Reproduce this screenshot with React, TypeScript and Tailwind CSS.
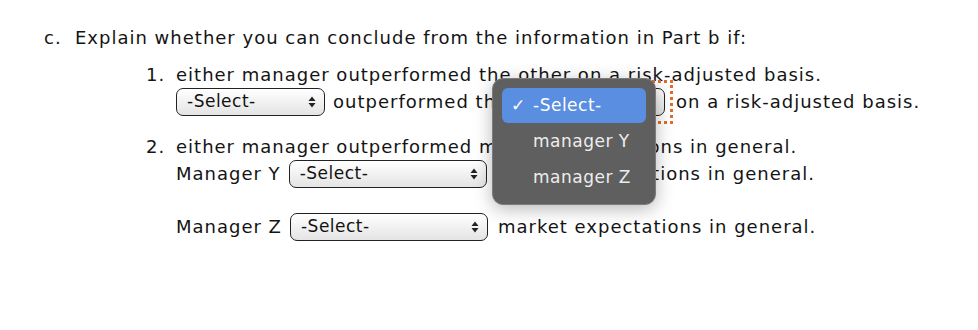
import React from 'react';

function Arrows() {
  return (
    <svg width="8" height="12" viewBox="0 0 8 12" className="shrink-0">
      <path d="M4 0.5 L7.5 5 L0.5 5 Z" fill="#222" />
      <path d="M4 11.5 L7.5 7 L0.5 7 Z" fill="#222" />
    </svg>
  );
}

function FakeSelect({ w }: { w: string }) {
  return (
    <div
      className={`${w} h-[28px] shrink-0 flex items-center justify-between pl-[10px] pr-[8px] rounded-[7px] border-[1.5px] border-[#222] bg-gradient-to-b from-white to-[#e4e4e4] text-[17px] tracking-[0.5px] text-[#111]`}
    >
      <span>-Select-</span>
      <Arrows />
    </div>
  );
}

export default function App() {
  return (
    <div className="relative w-[978px] h-[330px] bg-white overflow-hidden pt-[24px] pl-[44px] text-[18px] leading-[27px] tracking-[1px] text-[#141414] font-['DejaVu_Sans',sans-serif]">
      {/* part c heading */}
      <div className="flex">
        <span className="w-[31px] shrink-0">c.</span>
        <span>Explain whether you can conclude from the information in Part b if:</span>
      </div>

      <div className="mt-[10px] ml-[102px] space-y-[18px]">
        {/* item 1 */}
        <div className="flex">
          <span className="w-[30px] shrink-0">1.</span>
          <div>
            <p>either manager outperformed the other on a risk-adjusted basis.</p>
            <div className="flex items-center h-[27px] gap-[8px]">
              <FakeSelect w="w-[149px]" />
              <span>outperformed the</span>
              {/* focused select: square dotted focus ring */}
              <div className="shrink-0 outline-dotted outline-[3px] outline-offset-[5px] outline-[#de6f2a]">
                <FakeSelect w="w-[149px]" />
              </div>
              <span className="ml-[3px]">on a risk-adjusted basis.</span>
            </div>
          </div>
        </div>

        {/* item 2 */}
        <div className="flex">
          <span className="w-[30px] shrink-0">2.</span>
          <div>
            <p>either manager outperformed market expectations in general.</p>
            <div className="flex items-center h-[27px] gap-[8px]">
              <span>Manager Y</span>
              <FakeSelect w="w-[198px]" />
              <span className="ml-[2px]">market expectations in general.</span>
            </div>
            <div className="flex items-center h-[27px] gap-[8px] mt-[26px]">
              <span>Manager Z</span>
              <FakeSelect w="w-[198px]" />
              <span className="ml-[2px]">market expectations in general.</span>
            </div>
          </div>
        </div>
      </div>

      {/* open dropdown menu */}
      <div className="absolute left-[492px] top-[78px] w-[164px] rounded-[11px] border border-[#7c7c7c] bg-[#5f5f5f] p-[9px] shadow-[0_4px_18px_rgba(0,0,0,0.28)] text-[17px] tracking-[0.5px] text-[#ededed]">
        <div className="flex items-center h-[35px] rounded-[6px] bg-[#5a8ee0] text-white">
          <span className="w-[31px] pl-[9px] text-[17px]">✓</span>
          <span>-Select-</span>
        </div>
        <div className="flex items-center h-[36px] pl-[31px]">manager Y</div>
        <div className="flex items-center h-[36px] pl-[31px]">manager Z</div>
      </div>
    </div>
  );
}
